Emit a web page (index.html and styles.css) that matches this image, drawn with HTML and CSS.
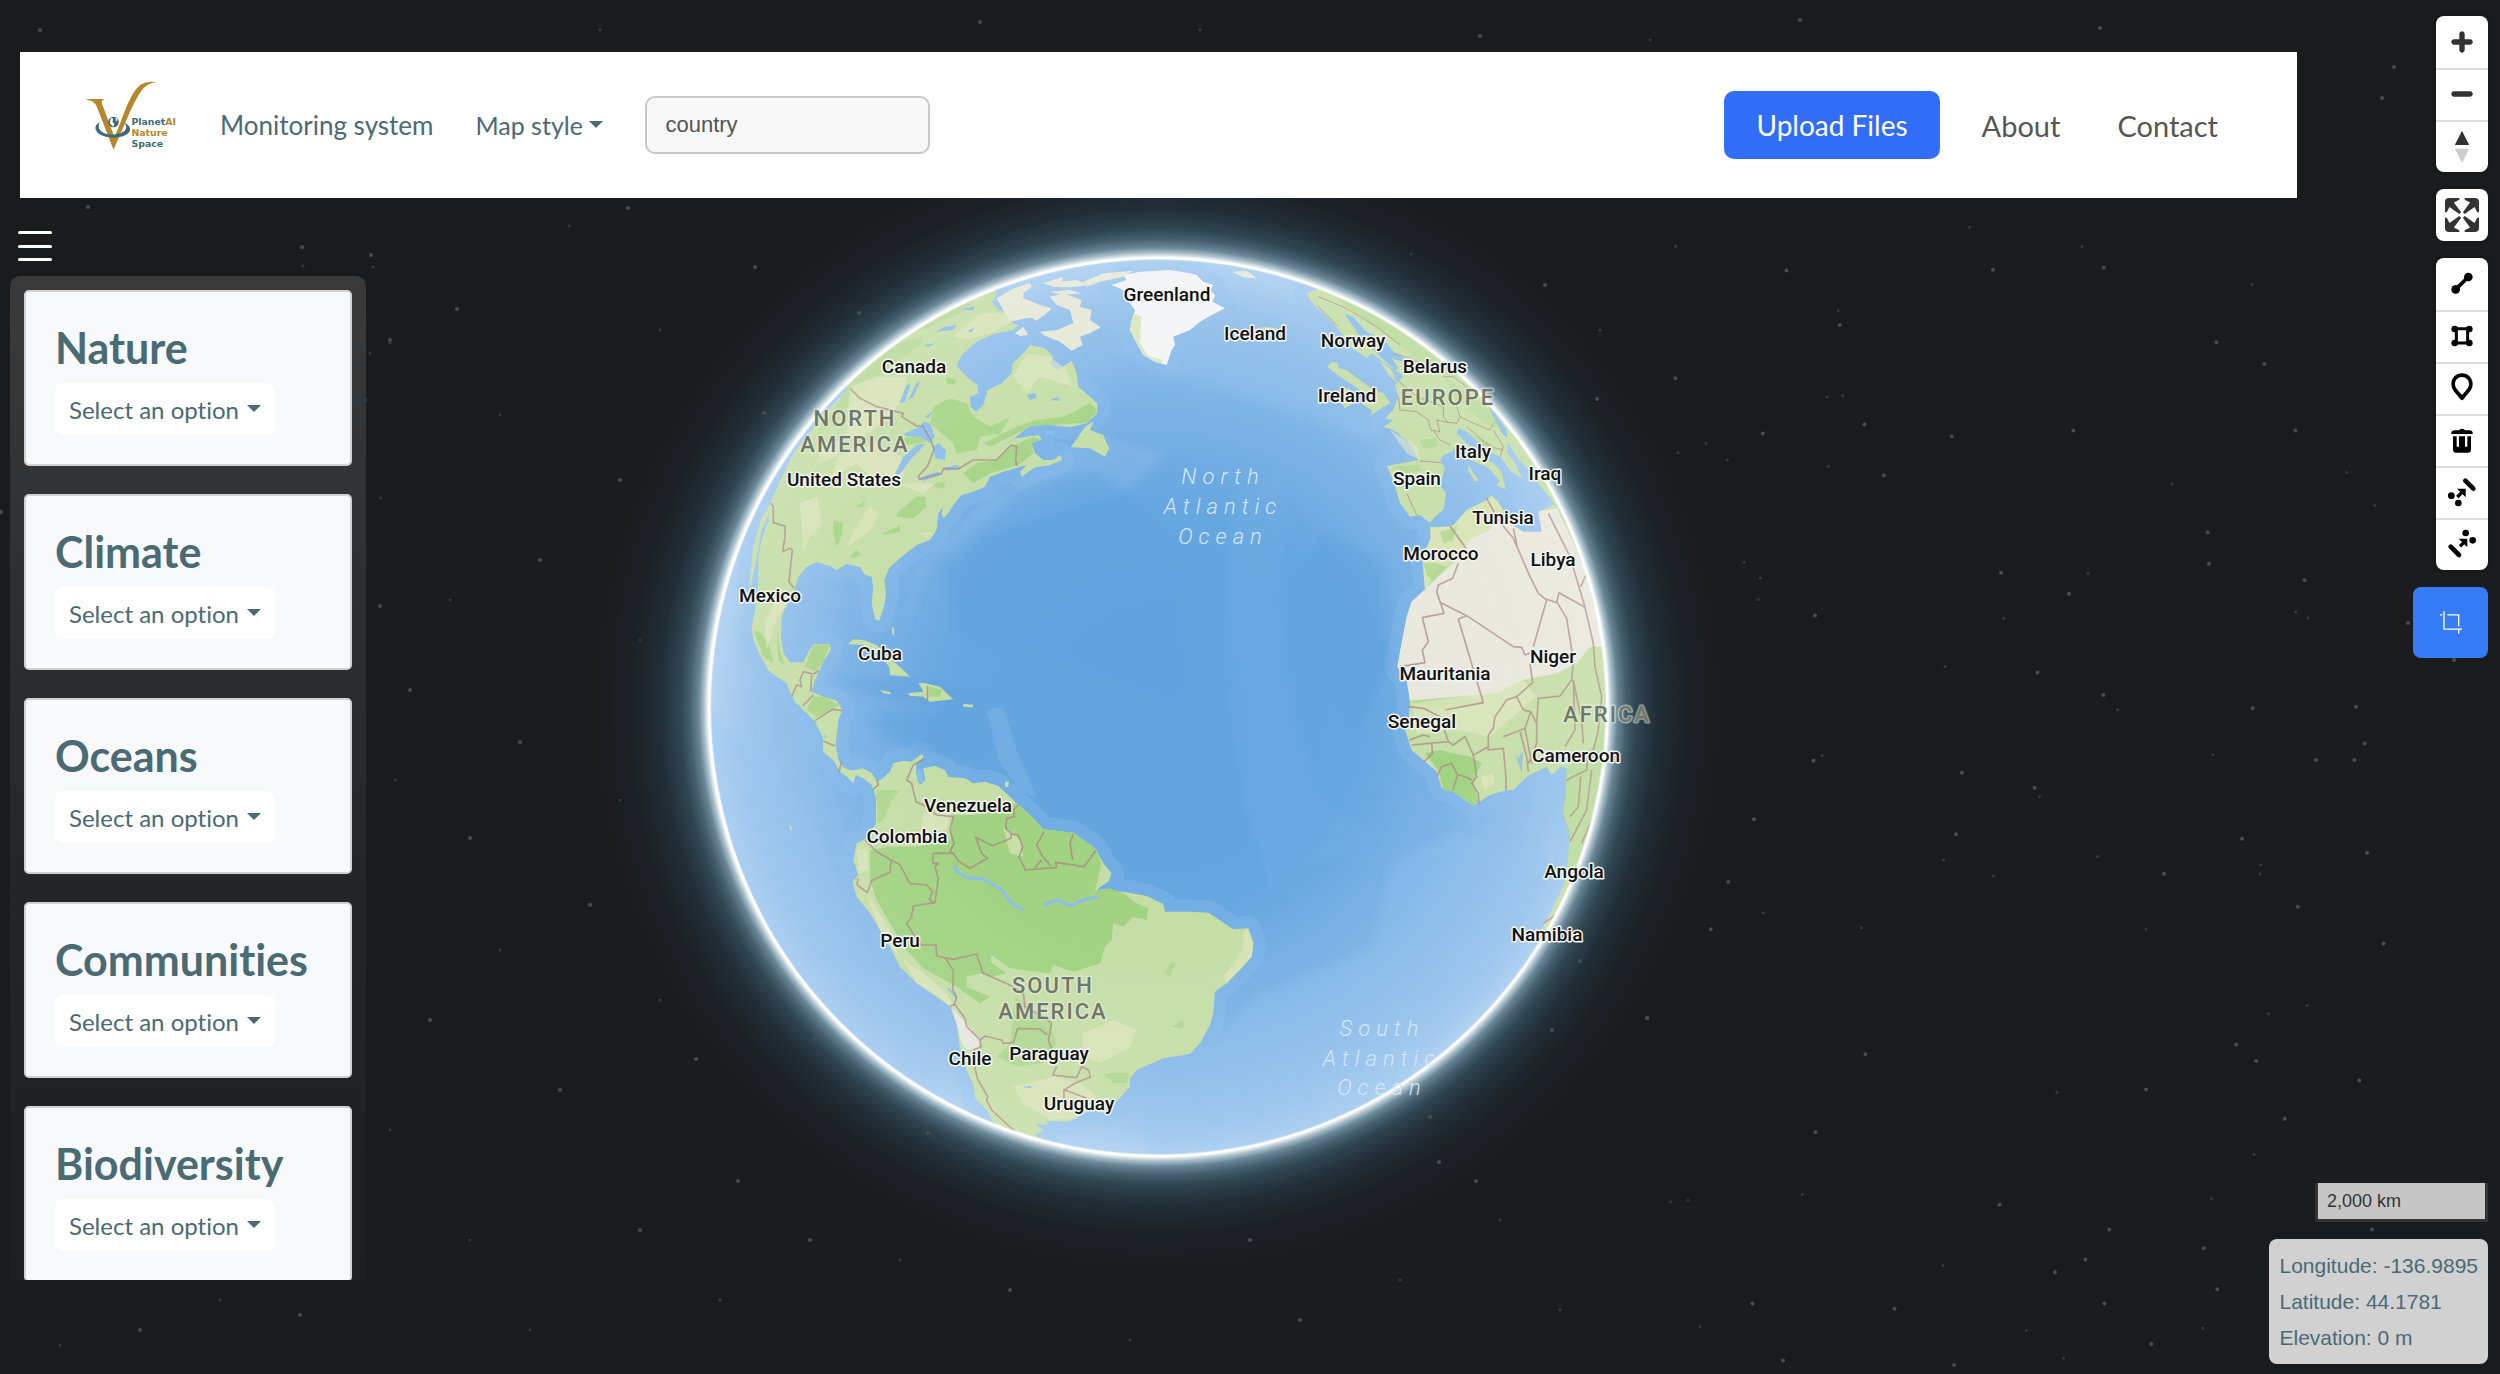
FILE: index.html
```
<!DOCTYPE html>
<html lang="en">
<head>
    <meta charset="UTF-8">
    <meta name="viewport" content="width=device-width, initial-scale=1.0">
    <title>PlanetAI Nature Space</title>
    <link rel="stylesheet" href="styles.css">
</head>
<body>
    <svg class="map" viewBox="0 0 2500 1374" preserveAspectRatio="xMidYMid slice" role="img" aria-label="Globe">
        <defs>
            <radialGradient id="glow" gradientUnits="userSpaceOnUse" cx="1158" cy="707" r="600">
                <stop offset="0.749" stop-color="#fff"/>
                <stop offset="0.757" stop-color="#a9c0cc"/>
                <stop offset="0.766" stop-color="#6a8797"/>
                <stop offset="0.78" stop-color="#46606f"/>
                <stop offset="0.797" stop-color="#2f4552"/>
                <stop offset="0.832" stop-color="#212d36"/>
                <stop offset="0.88" stop-color="#1c2126"/>
                <stop offset="0.94" stop-color="#1a1b1d"/>
            </radialGradient>
            <radialGradient id="ocean" gradientUnits="userSpaceOnUse" cx="1405" cy="1431" r="1347">
                <stop offset="0" stop-color="#62a3de"/>
                <stop offset="0.45" stop-color="#67a7e0"/>
                <stop offset="0.7" stop-color="#7ab1e5"/>
                <stop offset="0.9" stop-color="#94c0ea"/>
                <stop offset="1" stop-color="#a9cdf0"/>
            </radialGradient>
            <radialGradient id="haze" gradientUnits="userSpaceOnUse" cx="1405" cy="1431" r="1347">
                <stop offset="0.5" stop-color="#fff" stop-opacity="0"/>
                <stop offset="0.93" stop-color="#fff" stop-opacity="0.1"/>
                <stop offset="0.994" stop-color="#fff" stop-opacity="0.15"/>
                <stop offset="1" stop-color="#fff" stop-opacity="0.9"/>
            </radialGradient>
            <clipPath id="disc"><circle cx="1405" cy="1431" r="1347"/></clipPath>
            <filter id="soft"><feGaussianBlur stdDeviation="14"/></filter>
            <path id="americas" d="M915 180L920 195 905 215 925 240 950 245 960 275 985 285 970 300 910 312 860 335 815 375 800 408 830 440 862 465 865 490 840 500 842 530 858 545 880 525 893 480 935 460 965 430 968 400 1000 370 1020 345 1065 355 1090 380 1080 400 1100 420 1125 405 1145 392 1160 430 1165 470 1200 500 1222 520 1222 550 1190 580 1140 592 1080 585 1040 583 1010 595 940 650 975 625 1045 615 1055 628 1025 640 1035 670 1060 690 1090 690 1110 675 1117 690 1080 705 1035 712 995 740 990 725 1010 705 985 712 940 725 900 740 885 770 850 785 815 795 790 825 775 850 760 865 755 850 760 830 745 850 740 900 720 930 680 945 630 985 597 1015 583 1050 588 1090 582 1130 568 1172 556 1168 545 1120 550 1070 545 1040 525 1035 510 1012 470 1002 440 1020 420 1008 380 997 350 1010 325 1040 312 1080 290 1120 275 1160 273 1220 280 1270 300 1297 340 1297 355 1265 370 1243 420 1243 422 1260 400 1295 385 1330 375 1350 365 1385 400 1400 440 1412 457 1440 445 1470 437 1545 445 1590 460 1612 485 1622 520 1615 545 1630 562 1655 575 1648 600 1625 610 1600 640 1592 665 1595 695 1572 702 1580 680 1600 678 1630 690 1665 705 1650 700 1615 735 1608 765 1620 775 1640 825 1645 850 1660 885 1655 925 1668 960 1700 985 1725 1020 1755 1060 1798 1150 1808 1215 1855 1240 1900 1265 1930 1255 1955 1225 1975 1215 2000 1250 1985 1300 1985 1370 1998 1420 2022 1425 2045 1500 2045 1555 2048 1630 2098 1675 2095 1690 2140 1685 2180 1650 2220 1610 2260 1575 2285 1570 2350 1560 2385 1530 2440 1500 2472 1420 2485 1340 2520 1320 2545 1320 2570 1275 2620 1240 2650 1200 2640 1160 2665 1130 2675 1070 2672 1075 2685 1035 2682 1060 2700 1035 2715 1062 2728 1000 2760 940 2700 905 2670 890 2640 855 2605 852 2570 830 2520 815 2480 805 2420 800 2380 780 2330 740 2300 680 2260 630 2210 600 2150 570 2100 540 2050 500 2000 488 1955 505 1935 490 1890 500 1840 530 1825 558 1780 558 1700 545 1665 520 1645 497 1635 490 1660 470 1640 450 1625 430 1590 400 1565 398 1520 375 1475 345 1445 315 1415 300 1385 290 1360 260 1340 235 1320 210 1275 190 1230 185 1190 195 1140 205 1060 205 980 215 930 232 880 240 845 215 900 200 980 182 1070 178 1060 190 950 212 870 240 820 262 770 310 670 400 555 470 480 480 440 600 300 800 190Z"/>
            <path id="eurasia" d="M1850 190L1862 212 1875 228 1900 250 1930 280 1955 310 1980 350 2030 385 2045 370 2100 410 2130 430 2140 440 2115 465 2125 500 2110 540 2085 565 2110 572 2080 590 2110 600 2150 630 2170 655 2185 690 2150 697 2090 708 2105 740 2115 770 2130 820 2160 860 2190 855 2220 878 2235 860 2260 840 2268 790 2250 765 2265 715 2250 690 2262 675 2285 665 2300 645 2340 690 2390 710 2410 730 2430 755 2418 765 2448 778 2440 750 2435 725 2410 700 2385 685 2330 640 2300 610 2305 595 2330 605 2370 640 2400 665 2430 680 2460 720 2498 748 2475 700 2450 665 2455 640 2480 680 2520 725 2560 780 2595 822 2545 845 2555 905 2500 905 2475 890 2440 840 2425 815 2405 795 2385 812 2330 840 2290 885 2260 893 2220 890 2222 925 2197 985 2210 1050 2205 1085 2165 1115 2150 1160 2135 1240 2122 1310 2150 1350 2160 1410 2155 1480 2145 1500 2165 1560 2200 1590 2240 1625 2255 1675 2290 1685 2350 1727 2400 1695 2450 1680 2470 1680 2510 1640 2570 1610 2585 1635 2615 1608 2630 1615 2628 1700 2618 1745 2640 1810 2637 1850 2630 1920 2620 1970 2550 2110 2700 2050 2800 1431 2700 1000 2600 700 2300 300 1950 150Z"/>
            <path id="greenland" d="M1265 165L1310 150 1300 135 1350 125 1440 120 1500 130 1520 135 1540 155 1570 165 1560 180 1575 195 1568 215 1605 235 1560 258 1530 275 1500 300 1450 320 1455 345 1445 360 1430 405 1395 395 1360 375 1335 330 1320 300 1325 270 1335 240 1320 220 1340 200 1300 180Z"/>
        </defs>

        <rect width="2500" height="1374" fill="#1a1b1d"/>
        <circle cx="1158" cy="707" r="600" fill="url(#glow)"/>

        <!-- stars -->
        <g class="stars" transform="translate(1640 200) scale(.4847 .7487)">
            <path d="M302 94h.1M728 93h.1M957 90h.1M412 167h.1M73 238h.1M463 300h.1M253 312h.1M643 316h.1M894 308h.1M1189 190h.1M1288 219h.1M1352 308h.1M503 368h.1M1171 444h.1M1174 486h.1M1371 508h.1M745 498h.1M885 526h.1M361 555h.1M820 631h.1M956 661h.1M1264 679h.1M1477 677h.1M1395 748h.1M1474 748h.1M1495 726h.1M358 749h.1M664 765h.1M814 785h.1M235 827h.1M652 847h.1M182 911h.1M146 974h.1M1081 900h.1M1242 853h.1M1500 872h.1M1534 993h.1M1357 944h.1M15 1093h.1M465 1141h.1M1230 1128h.1M1271 1150h.1M1484 1176h.1M1044 1188h.1M1330 1227h.1M362 1245h.1M742 1342h.1M968 1375h.1M919 1415h.1M958 1474h.1M1163 1400h.1M1191 1455h.1M1510 1375h.1M232 1474h.1M525 1481h.1M648 1556h.1M295 1550h.1M1055 1528h.1M856 1432h.1"/>
            <path class="faint" d="M73 62h.1M680 36h.1M912 62h.1M1263 113h.1M409 148h.1M386 263h.1M418 261h.1M180 347h.1M389 356h.1M136 325h.1M1098 379h.1M1458 364h.1M1516 408h.1M215 484h.1M248 505h.1M244 534h.1M750 559h.1M924 499h.1M1353 550h.1M1378 558h.1M629 623h.1M985 681h.1M1182 741h.1M376 742h.1M824 797h.1M626 882h.1M729 903h.1M944 877h.1M1281 888h.1M1279 900h.1M254 952h.1M457 972h.1M1044 974h.1M1376 1076h.1M1297 1087h.1M860 1192h.1M1267 1275h.1M63 1338h.1M99 1336h.1M335 1328h.1M625 1423h.1M1179 1334h.1M797 1510h.1M1161 1507h.1M124 1505h.1M874 1547h.1"/>
        </g>
        <g class="stars">
            <path d="M40 30h.1M88 207h.1M628 208h.1M302 247h.1M371 255h.1M328 279h.1M365 400h.1M380 606h.1M1 512h.1M457 309h.1M755 267h.1M859 313h.1M764 413h.1M815 1039h.1M928 1133h.1M738 1181h.1M696 1059h.1M410 690h.1M520 742h.1M470 838h.1M590 905h.1M430 1020h.1M560 1090h.1M640 1230h.1M300 1315h.1M140 1330h.1M1439 1162h.1M1430 1117h.1M1552 1030h.1M1647 1018h.1M1476 1181h.1M1597 399h.1M1545 285h.1M1580 961h.1M2394 67h.1M2408 623h.1M2454 660h.1M2382 98h.1M2100 28h.1M1800 20h.1M1480 36h.1M980 22h.1M390 340h.1M620 480h.1M540 560h.1M810 1240h.1M1010 1290h.1M1300 1320h.1M1250 1240h.1"/>
            <path class="faint" d="M600 30h.1M569 226h.1M303 266h.1M373 267h.1M390 343h.1M370 353h.1M381 498h.1M500 415h.1M660 330h.1M640 640h.1M450 600h.1M395 780h.1M620 800h.1M500 950h.1M660 1000h.1M390 1130h.1M470 1240h.1M530 1330h.1M720 1300h.1M900 1260h.1M1130 1340h.1M1400 1280h.1M1560 1310h.1M1500 1220h.1M1600 330h.1M1676 246h.1M1678 453h.1M1200 30h.1M1650 40h.1M220 1300h.1M60 1345h.1M1411 254h.1"/>
        </g>

        <!-- globe, drawn at three units per pixel -->
        <g transform="translate(690 230) scale(.33333)">
            <g clip-path="url(#disc)">
                <circle cx="1405" cy="1431" r="1347" fill="url(#ocean)"/>
                <!-- shelves -->
                <g class="shelf">
                    <use href="#americas"/>
                    <use href="#eurasia"/>
                    <use href="#greenland"/>
                </g>
                <g fill="#8dbfec" opacity=".4" filter="url(#soft)">
                    <path d="M1210 340L1600 480 1850 560 2050 640 2100 560 2000 420 1700 300 1500 330Z"/>
                    <path d="M1230 600L1300 640 1440 670 1310 780 1200 720 1000 780 900 860 720 1000 640 1200 680 1020 900 800Z"/>
                    <path d="M0 1400L200 1550 380 1800 460 2000 600 2300 780 2600 500 2500 100 2000Z"/>
                    <path d="M1700 2300L2050 2150 2100 1900 2300 1800 2600 1900 2500 2200 2000 2700 1400 2780 1330 2700Z"/>
                    <path d="M1630 760L1800 720 1760 1100 1820 1500 1900 1720 2080 1800 1750 1980 1660 1700 1600 1300Z" opacity=".25"/>
                </g>
                <g fill="#5fa0dd" opacity=".45" filter="url(#soft)">
                    <path d="M760 1020L900 900 1300 800 1500 1000 1480 1400 1250 1350 1000 1280 800 1200Z"/>
                    <path d="M1900 900L2080 1000 2100 1300 2000 1500 1880 1300 1820 1050Z"/>
                    <path d="M560 1440L880 1460 870 1580 700 1560 560 1520Z"/>
                    <path d="M400 1340L720 1350 900 1410 850 1440 560 1400Z"/>
                </g>
                <path d="M890 1440L940 1430 980 1560 1040 1700 1000 1690 930 1600Z" fill="#8fbfec" opacity=".3"/>

                <g class="land">
                    <use href="#americas"/>
                    <use href="#eurasia"/>
                    <!-- newfoundland, baffin and the arctic islands -->
                    <path d="M1212 573L1200 600 1240 615 1250 640 1258 655 1245 680 1200 655 1142 652 1165 620 1185 590Z"/>
                    <path class="ice" d="M1080 200L1120 190 1175 210 1170 230 1205 240 1200 270 1232 292 1200 310 1170 320 1178 345 1145 362 1110 335 1060 315 1050 305 1100 300 1150 280 1140 240 1100 225Z"/>
                    <path class="ice" d="M920 205L960 180 1020 158 1025 170 1000 190 1000 205 1050 225 1085 235 1060 258 1010 265 960 275 940 240Z"/>
                    <path class="ice" d="M1060 160L1120 140 1115 155 1160 150 1200 165 1140 172 1090 170ZM1180 155L1240 130 1330 122 1300 140 1230 155 1190 170ZM975 310L1000 290 1015 315 990 318ZM1080 185L1140 180 1175 190 1120 195ZM1020 260L1065 235 1080 240 1040 272Z"/>
                    <path class="ice" d="M1625 125L1670 122 1700 145 1660 142Z"/>
                    <path d="M1690 300L1720 290 1760 295 1770 315 1720 325Z"/>
                    <!-- caribbean -->
                    <path d="M473 1243L490 1228 520 1230 560 1245 600 1285 640 1320 660 1340 600 1335 598 1310 560 1270 520 1245ZM570 1380L600 1385 603 1393 580 1390ZM653 1390L700 1385 685 1358 705 1360 750 1370 790 1408 720 1415 700 1400 660 1397ZM820 1422L850 1424 848 1432 820 1430ZM605 1190L612 1195 613 1220 606 1208Z"/>
                    <path d="M945 1655L957 1655 955 1672 945 1670ZM297 1783L305 1790 305 1805 299 1795Z"/>
                    <!-- british isles, denmark, sardinia -->
                    <path d="M1925 395L1945 400 1945 415 1970 420 2010 450 2050 480 2080 490 2102 520 2080 530 2045 555 2045 540 2020 525 2010 480 1965 450 1930 425 1912 410ZM1950 480L1980 475 1990 520 1965 535 1950 515ZM2068 390L2100 415 2128 460 2100 440ZM2335 705L2365 750 2355 755 2335 720Z"/>
                </g>
                <use href="#greenland" fill="#f2f4f5"/>
                <path d="M1335 250L1355 260 1352 290 1350 340 1375 378 1420 390 1415 400 1395 395 1360 375 1335 330 1320 300 1325 270Z" fill="#dce6bf"/>

                <!-- baltic and black sea -->
                <g class="water">
                    <path d="M1962 250L1990 262 2030 305 2080 330 2100 350 2110 365 2160 395 2150 400 2105 385 2125 415 2115 420 2050 360 2010 320ZM2395 530L2420 555 2450 600 2452 625 2435 610 2415 570Z"/>
                </g>

                <!-- desert and forests -->
                <path d="M2197 1085L2245 1040 2290 1000 2330 930 2365 890 2440 870 2475 890 2500 905 2555 905 2545 845 2600 835 2680 1000 2745 1250 2700 1250 2660 1300 2600 1330 2500 1350 2420 1390 2300 1400 2160 1412 2150 1350 2122 1310 2135 1240 2150 1160 2165 1115Z" fill="#e8e8de"/>
                <path d="M2330 840L2385 815 2405 800 2425 820 2440 840 2400 900 2345 925 2290 990 2230 1030 2205 1085 2197 985 2222 925 2222 893 2290 888Z" fill="#d7e4b3"/>
                <g class="forest">
                    <path d="M2200 1000L2240 1000 2270 1010 2230 1050 2212 1040ZM2250 905L2300 890 2290 930 2260 940Z" opacity=".6"/>
                    <path d="M2205 1570L2250 1560 2290 1570 2340 1580 2375 1600 2350 1650 2365 1715 2350 1727 2290 1685 2260 1680 2245 1620Z"/>
                    <path d="M2630 1615L2700 1560 2745 1480 2740 1620 2690 1820 2650 1960 2620 1970 2637 1850 2618 1745Z" opacity=".3"/>
                    <path d="M2160 1412L2300 1400 2390 1420 2300 1430 2200 1440Z" opacity=".4"/>
                    <!-- amazon -->
                    <path d="M790 1755L850 1755 900 1740 965 1720 985 1722 1020 1755 1060 1798 1150 1808 1215 1855 1235 1900 1215 1980 1260 1975 1300 1990 1340 2020 1375 2035 1370 2070 1330 2060 1300 2090 1270 2080 1265 2130 1245 2150 1230 2200 1150 2225 1090 2205 1080 2230 960 2215 905 2175 900 2195 950 2230 900 2240 870 2230 830 2240 830 2270 900 2300 870 2320 800 2270 700 2215 640 2150 600 2080 560 2010 540 1950 540 1860 600 1850 680 1850 780 1830Z" opacity=".95"/>
                    <path d="M560 1680L630 1680 600 1720 580 1770 562 1780ZM975 2300L1080 2380 1100 2440 1060 2500 980 2510 920 2480 960 2440ZM1240 2530L1320 2530 1310 2560 1270 2560ZM1440 2200L1460 2195 1440 2240 1428 2225ZM1445 2390L1480 2370 1480 2395Z" opacity=".55"/>
                    <!-- canada and the states -->
                    <path d="M730 530L780 505 830 520 850 560 900 590 960 560 930 610 870 620 860 660 800 670 790 640 720 580Z" opacity=".8"/>
                    <path d="M980 590L1040 570 1120 560 1190 530 1222 545 1190 578 1080 585 1020 590 960 620 900 650 880 640ZM820 730L860 700 920 690 960 650 1030 620 1050 628 1025 640 1030 670 985 705 900 730 850 760ZM770 440L800 450 790 465 770 460ZM1160 540L1200 520 1220 540 1180 555Z" opacity=".85"/>
                    <path d="M620 850L680 800 705 800 710 830 670 865 620 860ZM430 870L460 880 455 920 440 950 430 910ZM580 910L630 885 630 905 580 915ZM480 980L500 958 512 975 490 985ZM730 760L765 755 760 775 740 775ZM500 830L525 810 520 830ZM640 625L690 615 710 635 650 645Z" opacity=".8"/>
                    <path d="M370 1245L420 1243 400 1295 380 1325 345 1310ZM370 1400L400 1400 450 1425 410 1450 380 1460 350 1440ZM190 1200L215 1210 240 1250 250 1300 220 1280ZM260 1190L270 1260 285 1310 265 1290ZM720 1370L755 1380 750 1400 715 1400Z" opacity=".75"/>
                    <path d="M500 430L640 330 700 320 690 345 560 440 470 530 400 600 380 620 430 540ZM640 300L760 230 850 210 830 240 700 300Z" opacity=".35"/>
                    <path d="M1940 205L2060 250 2180 340 2300 440 2240 430 2120 340 2000 250ZM2260 440L2380 520 2440 600 2380 580 2300 500Z" opacity=".3"/>
                    <path d="M2110 710L2180 705 2200 720 2150 730ZM2190 630L2240 625 2240 650 2200 655ZM2340 610L2400 640 2420 665 2380 645Z" opacity=".5"/>
                </g>
                <g class="plain">
                    <path d="M480 470L560 440 650 440 640 500 600 560 520 620 400 640 380 700 560 640 650 690 640 740 540 740 500 700 420 750 470 600Z"/>
                    <path d="M330 820L380 800 400 880 360 920 340 960ZM540 830L570 850 540 900 500 930 470 950 510 870ZM690 910L725 905 710 925ZM620 760L740 760 700 790ZM870 250L950 250 960 280 900 310 830 330 790 320Z"/>
                    <path d="M970 440L1010 370 1080 380 1130 420 1150 470 1050 440 1010 490ZM260 1100L290 1080 290 1130 262 1160 230 1260 225 1180Z"/>
                    <path d="M640 2190L700 2230 770 2290 800 2350 850 2400 830 2420 800 2340 750 2305 680 2260ZM500 1860L530 1850 535 1920 505 1930ZM700 1750L780 1750 770 1800 690 1810ZM940 1790L990 1830 1000 1880 960 1870ZM530 1990L600 2100 630 2190 570 2100Z"/>
                    <path d="M970 2570L1090 2540 1170 2560 1220 2600 1160 2665 1080 2670 1000 2620ZM1180 2410L1270 2370 1340 2400 1320 2450 1230 2500 1180 2480ZM1675 2095L1690 2140 1685 2180 1610 2260 1600 2240 1660 2160 1660 2110Z"/>
                    <path d="M2100 600L2180 650 2190 690 2150 670ZM2165 1420L2390 1390 2500 1350 2540 1400 2480 1450 2400 1520 2300 1500 2180 1510ZM2370 1640L2410 1630 2415 1660 2385 1680ZM2250 370L2400 460 2500 600 2430 540Z"/>
                </g>
                <path d="M785 2335L810 2360 870 2430 865 2455 830 2460 815 2440 805 2400Z" fill="#e6e6e0"/>

                <!-- lakes and rivers -->
                <g class="water">
                    <path d="M640 612L690 590 700 575 720 580 735 620 720 640 690 620 650 618ZM616 730L640 680 680 645 705 640 690 660 660 690 640 720 622 738ZM728 650L745 640 768 660 765 690 735 685ZM685 745L740 725 760 732 700 752ZM755 715L800 705 815 715 770 722ZM705 560L730 542 715 565ZM628 520L650 465 662 462 645 515ZM655 510L680 458 690 455 670 500ZM735 305L765 290 800 285 790 300ZM700 345L740 340 715 350ZM810 240L855 228 850 240ZM1010 495L1035 488 1040 505 1020 510ZM1080 510L1105 500 1110 512ZM835 300L855 295 840 308Z"/>
                    <path d="M680 1615L698 1625 700 1660 682 1655ZM772 2270L802 2300 800 2308 775 2280ZM995 2570L1025 2568 1022 2575ZM403 1508L410 1520 405 1525ZM2475 1570L2485 1585 2498 1565 2495 1630 2486 1600Z"/>
                    <path d="M1065 598L1085 605 1095 615 1070 608Z"/>
                </g>
                <path d="M793 1905L800 1925 830 1942 880 1948 935 1980 970 2025 1000 2037M1060 2025L1100 2010 1145 2028 1170 2013 1225 2000" class="river"/>

                <!-- country borders -->
                <path class="border" d="M480 475L510 505 560 530 640 550 635 560 680 588 698 588 725 635 732 660 712 710 685 738 688 748 755 730 760 715 805 717 850 690 920 690 963 645 980 650 977 690 980 708"/>
                <path class="border" d="M242 820L250 830 250 878 285 888 285 920 278 965 300 955 307 960 297 1055 312 1075M387 1322L370 1332 340 1325 330 1350 335 1370 320 1365 305 1400M365 1335L362 1385M370 1395L338 1428M375 1472L428 1438 457 1442M398 1532L435 1548M455 1592L447 1628M560 1650L565 1665 548 1680M713 1368L712 1412"/>
                <path class="border" d="M700 1588L670 1605 650 1650 665 1660 678 1715 700 1725 740 1755 790 1760 780 1800 792 1840 780 1865 790 1870 730 1870 728 1900 745 1900 735 1910 745 1945 735 2018 670 2028 665 2060 650 2080 672 2115 695 2145 738 2145 740 2178 790 2188 860 2172 878 2228 970 2270 1000 2290 1005 2330 1060 2360 1085 2380 1075 2430 1085 2455"/>
                <path class="border" d="M525 1830L560 1865 603 1890 630 1905 660 1960 710 1965 728 1985 718 2008 732 2020M603 1890L600 1927 545 1952 532 1988 502 1965 503 1945M790 1870L805 1893 840 1915 893 1885 875 1870 857 1822 908 1847 963 1825 963 1812 985 1815 998 1850 987 1882 1007 1920 1100 1912 1097 1897 1182 1910 1217 1862M985 1725L970 1740 973 1760 950 1765 947 1795 965 1812M1062 1805L1040 1845 1055 1875 1082 1908M1150 1812L1140 1840 1148 1890M1055 1890L1035 1913"/>
                <path class="border" d="M765 2183L790 2222 788 2280 800 2300 793 2322 825 2365 830 2390 870 2430 885 2418 935 2430 940 2440 970 2438 983 2395 1050 2397 1072 2415M793 2322L780 2330M870 2430L873 2450 850 2460 855 2515 862 2545 893 2600 890 2610 905 2640 975 2705M1100 2510L1088 2535 1160 2543 1175 2510 1195 2520 1202 2540 1155 2560 1122 2580 1122 2610M1125 2580L1190 2605"/>
                <path class="border" d="M2280 888L2328 955M2305 1000L2288 1045 2245 1065 2240 1085 2262 1150 2197 1163 2215 1235 2197 1260 2205 1298 2130 1310M2250 1117L2330 1157 2470 1250 2495 1252 2505 1275 2530 1265M2330 1157L2305 1167 2380 1418 2265 1440M2390 805L2425 870 2470 925 2520 1040 2545 1090 2570 1110 2530 1250M2470 895L2482 950M2570 1108L2600 1118 2607 1088 2685 1132M2600 1115L2630 1165 2650 1290 2645 1350 2610 1398 2545 1405 2540 1480M2575 850L2640 980 2685 1132 2710 1240 2715 1310 2735 1400M2672 1070L2688 1035M2520 1300L2528 1358 2480 1400 2500 1440 2522 1445 2540 1480 2540 1540 2515 1600M2480 1400L2450 1410 2415 1460 2410 1495 2395 1515 2395 1560 2440 1555 2448 1640 2448 1680M2395 1550L2350 1575 2360 1640 2345 1660 2365 1690 2367 1722M2440 1520L2505 1495 2522 1445M2490 1505L2510 1580 2515 1625M2505 1495L2525 1600"/>
                <path class="border" d="M2155 1430L2200 1435 2250 1460 2275 1535 2165 1545M2275 1535L2290 1545 2325 1520 2350 1575M2158 1530L2200 1515 2220 1520M2200 1597L2228 1570 2225 1540M2240 1640L2255 1610 2285 1600 2303 1635 2288 1682M2303 1635L2325 1640 2345 1650M2630 1650L2690 1620 2695 1560M2640 1760L2665 1730 2672 1640M2640 1835L2690 1740 2705 1620M2675 1840L2710 1760M2560 2080L2620 2040M2625 1550L2655 1500 2650 1350M2680 1540L2675 1470 2660 1400 2650 1350M2705 1580L2725 1500 2735 1400"/>
                <path class="border thin" d="M1880 225L1910 255 1945 290M1885 200L1970 235 2060 290 2130 345M2125 500L2130 540 2180 545 2215 570 2222 600 2250 605 2240 570 2260 575 2300 580 2310 560 2340 575 2400 600 2410 580M2190 693L2255 698M2150 790L2180 855M2260 530L2260 560 2275 580M2300 530L2310 560M2330 590L2400 650 2440 660M2230 600L2250 630 2280 645M2260 440L2290 440 2330 470M2410 600L2440 650 2430 680M2110 440L2180 500 2260 530M2110 370L2160 385 2220 410"/>
                <circle cx="1405" cy="1431" r="1347" fill="url(#haze)"/>
            </g>
            <circle class="rim" cx="1405" cy="1431" r="1347"/>
        </g>

        <g class="countries">
            <text x="1167" y="301">Greenland</text>
            <text x="914" y="373">Canada</text>
            <text x="844" y="486">United States</text>
            <text x="770" y="602">Mexico</text>
            <text x="880" y="660">Cuba</text>
            <text x="1255" y="340">Iceland</text>
            <text x="1353" y="347">Norway</text>
            <text x="1435" y="373">Belarus</text>
            <text x="1347" y="402">Ireland</text>
            <text x="1473" y="458">Italy</text>
            <text x="1417" y="485">Spain</text>
            <text x="1545" y="480">Iraq</text>
            <text x="1503" y="524">Tunisia</text>
            <text x="1441" y="560">Morocco</text>
            <text x="1553" y="566">Libya</text>
            <text x="1553" y="663">Niger</text>
            <text x="1445" y="680">Mauritania</text>
            <text x="1422" y="728">Senegal</text>
            <text x="1576" y="762">Cameroon</text>
            <text x="1574" y="878">Angola</text>
            <text x="1547" y="941">Namibia</text>
            <text x="968" y="812">Venezuela</text>
            <text x="907" y="843">Colombia</text>
            <text x="900" y="947">Peru</text>
            <text x="970" y="1065">Chile</text>
            <text x="1049" y="1060">Paraguay</text>
            <text x="1079" y="1110">Uruguay</text>
        </g>
        <g class="continents">
            <text x="855" y="426">NORTH</text>
            <text x="855" y="452">AMERICA</text>
            <text x="1448" y="405">EUROPE</text>
            <text x="1607" y="722">AFRICA</text>
            <text x="1053" y="993">SOUTH</text>
            <text x="1053" y="1019">AMERICA</text>
        </g>
        <g class="oceans">
            <text x="1223" y="484">North</text>
            <text x="1223" y="514">Atlantic</text>
            <text x="1223" y="544">Ocean</text>
            <text x="1382" y="1036">South</text>
            <text x="1382" y="1066">Atlantic</text>
            <text x="1382" y="1095">Ocean</text>
        </g>
    </svg>

    <div class="page">
        <main class="main">
            <nav class="navbar">
                <svg class="logo" viewBox="48 40 272 270" role="img" aria-label="PlanetAI Nature Space">
                    <path d="M48 97H97V100Q90 101 92 110L130 212Q148 168 165 122 188 68 208 54 228 42 256 47 232 48 214 68 192 98 170 150L127 249 76 118Q68 100 48 100Z" fill="#b8862b"/>
                    <path d="M87 166Q70 174 73 188 80 210 124 213 170 212 177 190 178 176 160 168 168 178 164 188 156 203 124 204 92 202 84 186 80 174 87 166Z" fill="#3f6b76"/>
                    <circle cx="127" cy="166" r="16" fill="#3f6b76"/>
                    <path d="M119 153L126 156 124 166 130 172 126 180 116 170ZM133 152L140 160 134 164Z" fill="#fff"/>
                    <text x="181" y="174" fill="#3f6b76">Planet<tspan fill="#b8862b">AI</tspan></text>
                    <text x="181" y="208" fill="#b8862b">Nature</text>
                    <text x="181" y="242" fill="#3f6b76">Space</text>
                </svg>
                <a class="nav-link" href="#">Monitoring system</a>
                <label class="dropdown">
                    <select class="nav-select" aria-label="Map style">
                        <option>Map style</option>
                    </select>
                </label>
                <input class="search" type="text" placeholder="country" aria-label="country">
                <div class="nav-right">
                    <button class="upload" type="button">Upload Files</button>
                    <a class="nav-item" href="#">About</a>
                    <a class="nav-item" href="#">Contact</a>
                </div>
            </nav>
            <button class="hamburger" type="button" aria-label="Menu"><span></span><span></span><span></span></button>
            <div class="sidebar">
                <section class="card">
                    <h2>Nature</h2>
                    <label class="dropdown"><select class="option" aria-label="Nature"><option>Select an option</option></select></label>
                </section>
                <section class="card">
                    <h2>Climate</h2>
                    <label class="dropdown"><select class="option" aria-label="Climate"><option>Select an option</option></select></label>
                </section>
                <section class="card">
                    <h2>Oceans</h2>
                    <label class="dropdown"><select class="option" aria-label="Oceans"><option>Select an option</option></select></label>
                </section>
                <section class="card">
                    <h2>Communities</h2>
                    <label class="dropdown"><select class="option" aria-label="Communities"><option>Select an option</option></select></label>
                </section>
                <section class="card">
                    <h2>Biodiversity</h2>
                    <label class="dropdown"><select class="option" aria-label="Biodiversity"><option>Select an option</option></select></label>
                </section>
            </div>
        </main>

        <aside class="controls">
            <div class="ctrl-group">
                <button type="button" aria-label="Zoom in"><svg viewBox="0 0 29 29" fill="#333"><path d="M14.5 8.5c-.75 0-1.5.75-1.5 1.5v3h-3c-.75 0-1.5.75-1.5 1.5S9.25 16 10 16h3v3c0 .75.75 1.5 1.5 1.5S16 19.75 16 19v-3h3c.75 0 1.5-.75 1.5-1.5S19.75 13 19 13h-3v-3c0-.75-.75-1.5-1.5-1.5"/></svg></button>
                <button type="button" aria-label="Zoom out"><svg viewBox="0 0 29 29" fill="#333"><path d="M10 13c-.75 0-1.5.75-1.5 1.5S9.25 16 10 16h9c.75 0 1.5-.75 1.5-1.5S19.75 13 19 13z"/></svg></button>
                <button type="button" aria-label="Reset north"><svg viewBox="0 0 29 29" fill="#333"><path d="m10.5 14 4-8 4 8z"/><path d="m10.5 16 4 8 4-8z" fill="#ccc"/></svg></button>
            </div>
            <div class="ctrl-group">
                <button type="button" aria-label="Fullscreen"><svg viewBox="0 0 29 29" fill="#333"><path d="M24 16v5.5c0 1.75-.75 2.5-2.5 2.5H16v-1l3-1.5-4-5.5 1-1 5.5 4 1.5-3zM6 16l1.5 3 5.5-4 1 1-4 5.5 3 1.5v1H7.5C5.75 24 5 23.25 5 21.5V16zm7-11v1l-3 1.5 4 5.5-1 1-5.5-4L6 13H5V7.5C5 5.75 5.75 5 7.5 5zm11 2.5c0-1.75-.75-2.5-2.5-2.5H16v1l3 1.5-4 5.5 1 1 5.5-4 1.5 3h1z"/></svg></button>
            </div>
            <div class="ctrl-group">
                <button type="button" aria-label="Line"><svg viewBox="0 0 156 156"><path d="M59 94L97 57" stroke="#000" stroke-width="11"/><circle cx="59" cy="94" r="13"/><circle cx="97" cy="57" r="13"/></svg></button>
                <button type="button" aria-label="Polygon"><svg viewBox="0 0 156 156"><path d="M56 56H100M56 99H100M61 56V99M95 56V99" stroke="#000" stroke-width="9"/><circle cx="56" cy="57" r="10"/><circle cx="100" cy="57" r="10"/><circle cx="56" cy="99" r="10"/><circle cx="100" cy="99" r="10"/></svg></button>
                <button type="button" aria-label="Marker"><svg viewBox="0 0 156 156"><path fill-rule="evenodd" d="M78 34C60 34 46 48 46 66 46 86 64 98 72 110Q76 115 78 115 80 115 84 110C92 98 110 86 110 66 110 48 96 34 78 34ZM78 45C90 45 99 54 99 66 99 80 86 88 78 99 70 88 57 80 57 66 57 54 66 45 78 45Z"/></svg></button>
                <button type="button" aria-label="Delete"><svg viewBox="0 0 156 156"><path fill-rule="evenodd" d="M46 60V55Q47 50 54 49H69Q71 44 78 44 85 44 87 49H102Q109 50 110 55V60ZM51 67H105V108Q104 116 96 116H60Q52 116 51 108ZM62 67V98H69V67ZM87 67V98H94V67Z"/></svg></button>
                <button type="button" aria-label="Combine"><svg viewBox="0 0 156 156"><path d="M88 44L112 68" stroke="#000" stroke-width="14" stroke-linecap="round"/><path d="M64 93L80 77" stroke="#000" stroke-width="10"/><path d="M63 68H89V94Z"/><circle cx="46" cy="89" r="10"/><circle cx="67" cy="111" r="10"/></svg></button>
                <button type="button" aria-label="Uncombine"><svg viewBox="0 0 156 156"><path d="M44 86L69 111" stroke="#000" stroke-width="14" stroke-linecap="round"/><path d="M72 85L86 71" stroke="#000" stroke-width="10"/><path d="M68 62H94V88Z"/><circle cx="89" cy="45" r="10"/><circle cx="110" cy="67" r="10"/></svg></button>
            </div>
            <button class="crop" type="button" aria-label="Crop">
                <svg viewBox="0 0 66 68" fill="none" stroke="#fff" stroke-width="4"><path d="M12 0V54H66M0 11H7M22 11H56V46M56 56V68"/></svg>
            </button>
            <div class="scale">2,000 km</div>
            <div class="coords">
                <div>Longitude: -136.9895</div>
                <div>Latitude: 44.1781</div>
                <div>Elevation: 0 m</div>
            </div>
        </aside>
    </div>
</body>
</html>
```

FILE: styles.css
```
* {
    box-sizing: border-box;
}

body {
    margin: 0;
    height: 100vh;
    overflow: hidden;
    background-color: #1a1b1d;
    font-family: Lato, sans-serif;
    font-variant-ligatures: none;
    color: #4a6a74;
}

button, select, input {
    font-family: inherit;
    font-variant-ligatures: none;
    margin: 0;
}

/* map background */
.map {
    position: absolute;
    top: 0;
    left: 0;
    width: 100%;
    height: 100%;
}

.stars path {
    fill: none;
    stroke: #4a4b4d;
    stroke-width: 4px;
    stroke-linecap: round;
    vector-effect: non-scaling-stroke;
}

.stars .faint {
    stroke: #38393b;
    stroke-width: 3px;
}

.shelf {
    fill: none;
    stroke: #8fc0ee;
    stroke-width: 75;
    stroke-linejoin: round;
    opacity: 0.3;
}

.land {
    fill: #c5dea7;
}

.ice {
    fill: #e6e8d8;
}

.forest {
    fill: #9fd27f;
}

.plain {
    fill: #e3e7c3;
    opacity: 0.6;
}

.water {
    fill: #8bbdeb;
}

.river {
    fill: none;
    stroke: #8bbdeb;
    stroke-width: 9;
    stroke-linejoin: round;
}

.border {
    fill: none;
    stroke: #ab8580;
    stroke-width: 5;
    stroke-linejoin: round;
    opacity: 0.75;
}

.thin {
    stroke-width: 3;
}

.rim {
    fill: none;
    stroke: #fff;
    stroke-width: 7;
}

.map text {
    font-family: Roboto, sans-serif;
    text-anchor: middle;
}

.countries {
    font-size: 19px;
    font-weight: 500;
    fill: #111;
    stroke: #f4f7f4;
    stroke-width: 3px;
    stroke-linejoin: round;
    paint-order: stroke;
}

.continents {
    font-size: 22px;
    font-weight: 500;
    letter-spacing: 2px;
    fill: #6f7768;
    stroke: rgba(240, 243, 232, 0.5);
    stroke-width: 3px;
    stroke-linejoin: round;
    paint-order: stroke;
}

.oceans {
    font-size: 22px;
    font-style: italic;
    font-weight: 300;
    letter-spacing: 6px;
    fill: #d6e8f8;
}

/* page */
.page {
    position: relative;
    display: flex;
    height: 100%;
}

.main {
    flex: 1;
    display: flex;
    flex-direction: column;
    align-items: flex-start;
    padding: 52px 0 94px 10px;
}

.navbar {
    align-self: stretch;
    display: flex;
    align-items: center;
    gap: 42px;
    height: 146px;
    margin-left: 10px;
    padding: 0 79px 0 67px;
    background-color: #fff;
}

.logo {
    width: 91px;
    height: 90px;
    overflow: visible;
}

.logo text {
    font-family: "DejaVu Sans", sans-serif;
    font-size: 28px;
    font-weight: bold;
}

.nav-link {
    font-size: 26px;
    color: #4a6a74;
    text-decoration: none;
}

.dropdown {
    display: inline-grid;
    align-items: center;
}

.dropdown select {
    grid-area: 1 / 1;
    appearance: none;
    border: none;
    background: transparent;
    color: #4a6a74;
    font-size: 24px;
    cursor: pointer;
}

/* caret */
.dropdown::after {
    content: "";
    grid-area: 1 / 1;
    justify-self: end;
    margin-bottom: 2px;
    border-top: 7px solid #4a6a74;
    border-left: 7px solid transparent;
    border-right: 7px solid transparent;
    pointer-events: none;
}

.dropdown .nav-select {
    padding: 0 20px 0 0;
    font-size: 25px;
}

.search {
    width: 285px;
    height: 58px;
    padding: 0 18px;
    border: 2px solid #c8c8c8;
    border-radius: 10px;
    background-color: #f8f8f8;
    font-family: "Liberation Sans", sans-serif;
    font-size: 22px;
}

.search::placeholder {
    color: #555;
}

.nav-right {
    display: flex;
    align-items: center;
    gap: 57px;
    margin-left: auto;
}

.upload {
    height: 68px;
    margin-right: -15px;
    padding: 0 32px;
    border: none;
    border-radius: 10px;
    background-color: #316df6;
    color: #fff;
    font-size: 28px;
}

.nav-item {
    font-size: 29px;
    color: #555;
    text-decoration: none;
}

.hamburger {
    display: flex;
    flex-direction: column;
    justify-content: space-between;
    width: 34px;
    height: 30px;
    margin: 33px 0 15px 8px;
    padding: 0;
    border: none;
    background: none;
}

.hamburger span {
    height: 3px;
    border-radius: 2px;
    background-color: #fff;
}

.sidebar {
    flex: 1;
    min-height: 0;
    width: 356px;
    padding: 14px;
    overflow: hidden;
    border-radius: 10px 10px 0 0;
    background: linear-gradient(#3a3a3b, #242526 60%, #1d1e1f);
}

.card {
    height: 176px;
    margin-bottom: 28px;
    padding: 30px 29px;
    border: 2px solid #cfd1d3;
    border-radius: 5px;
    background-color: #f8f9fb;
}

.card h2 {
    margin: 0 0 9px;
    font-size: 43px;
    line-height: 52px;
}

.card .dropdown::after {
    margin-right: 14px;
}

.card .option {
    height: 52px;
    padding: 0 36px 0 14px;
    border-radius: 8px;
    background-color: #fff;
}

/* map controls */
.controls {
    display: flex;
    flex-direction: column;
    align-items: flex-end;
    gap: 17px;
    width: 203px;
    padding: 16px 12px 10px 0;
}

.ctrl-group {
    width: 52px;
    border-radius: 8px;
    background-color: #fff;
    box-shadow: 0 0 0 3px rgba(0, 0, 0, 0.1);
    overflow: hidden;
}

.ctrl-group button {
    display: block;
    width: 52px;
    height: 52px;
    padding: 0;
    border: none;
    background: none;
    cursor: pointer;
}

.ctrl-group button + button {
    border-top: 2px solid #ddd;
}

.ctrl-group svg {
    display: block;
    width: 52px;
    height: 52px;
}

.ctrl-group button + button svg {
    margin-top: -2px;
}

.crop {
    display: flex;
    align-items: center;
    justify-content: center;
    width: 75px;
    height: 71px;
    border: none;
    border-radius: 8px;
    background-color: #377cf7;
}

.crop svg {
    width: 22px;
    height: 23px;
}

.scale {
    width: 173px;
    height: 39px;
    margin-top: auto;
    padding-left: 9px;
    border: 3px solid #333;
    border-top: none;
    background-color: #c6c6c6;
    color: #333;
    font: 18px/36px "Liberation Sans", sans-serif;
}

.coords {
    padding: 9px 10px 8px;
    border-radius: 8px;
    background-color: #d1d1d1;
    font: 21px/36px "Liberation Sans", sans-serif;
    white-space: nowrap;
}
```
